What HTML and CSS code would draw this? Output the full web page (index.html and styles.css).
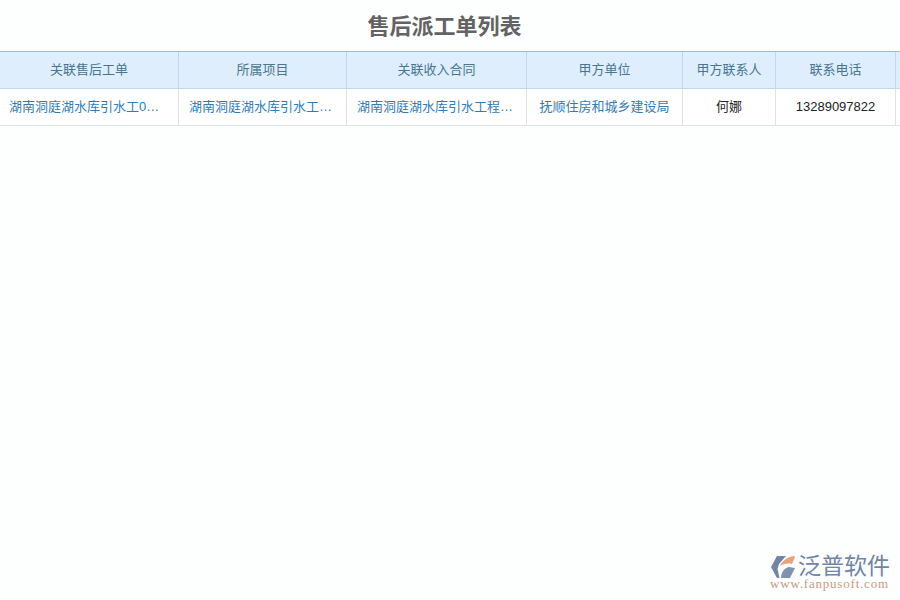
FILE: index.html
```html
<!DOCTYPE html>
<html lang="zh">
<head>
<meta charset="utf-8">
<title>售后派工单列表</title>
<link rel="stylesheet" href="styles.css">
</head>
<body>
<h1 class="title">售后派工单列表</h1>
<div class="table">
  <div class="row head">
    <div class="cell c1">关联售后工单</div>
    <div class="cell c2">所属项目</div>
    <div class="cell c3">关联收入合同</div>
    <div class="cell c4">甲方单位</div>
    <div class="cell c5">甲方联系人</div>
    <div class="cell c6">联系电话</div>
    <div class="cell c7"></div>
  </div>
  <div class="row body">
    <div class="cell c1 link left">湖南洞庭湖水库引水工0…</div>
    <div class="cell c2 link left">湖南洞庭湖水库引水工…</div>
    <div class="cell c3 link left">湖南洞庭湖水库引水工程…</div>
    <div class="cell c4 link">抚顺住房和城乡建设局</div>
    <div class="cell c5">何娜</div>
    <div class="cell c6">13289097822</div>
    <div class="cell c7"></div>
  </div>
</div>
<div class="brand">
  <div class="brand-top">
    <svg class="brand-mark" width="26" height="24" viewBox="0 0 26 24" aria-hidden="true">
      <path d="M7 1h9L9 9 7.500 14l2 9H7L1 12z" fill="#6f86a6"/>
      <path d="M10 11c2-5 7-9 14-10l1 1-3 7c-5-1-9 0-12 2z" fill="#e9a27c"/>
      <path d="M11 23c0-5 3-10 8-11l6 1-5 10z" fill="#7f93ae"/>
    </svg>
    <span class="brand-name">泛普软件</span>
  </div>
  <div class="brand-url">www.fanpusoft.com</div>
</div>
</body>
</html>
```

FILE: styles.css
```css
html, body {
  margin: 0;
  padding: 0;
  height: 600px;
  overflow: hidden;
  background: #fdfefe;
  font-family: "Liberation Sans", "Noto Sans CJK SC", sans-serif;
  font-size: 13px;
}
.title {
  box-sizing: border-box;
  margin: 0;
  padding-right: 11px;
  height: 51px;
  line-height: 53px;
  text-align: center;
  font-size: 22px;
  font-weight: bold;
  color: #636363;
}
.table {
  width: 900px;
  border-top: 1px solid #9dbdd6;
}
.row {
  display: flex;
  height: 36px;
  line-height: 35px;
  border-bottom: 1px solid #dde3e8;
}
.head {
  background: #deeefc;
  color: #4a7590;
  border-bottom-color: #c5d8ea;
}
.body {
  background: #fff;
  color: #222;
}
.cell {
  box-sizing: border-box;
  flex: none;
  text-align: center;
  white-space: nowrap;
  border-right: 1px solid #dde3e8;
}
.head .cell {
  border-right-color: #c5d8ea;
}
.c1 { width: 179px; }
.c2 { width: 168px; }
.c3 { width: 180px; }
.c4 { width: 156px; }
.c5 { width: 93px; }
.c6 { width: 120px; }
.c7 { width: 4px; border-right: 0; }
.link {
  color: #2f7db8;
}
.left {
  text-align: left;
  padding-left: 10px;
}
.c1.left {
  padding-left: 9px;
}
.brand {
  position: absolute;
  right: 10px;
  bottom: 10px;
  width: 120px;
}
.brand-top {
  display: flex;
  align-items: center;
  gap: 2px;
  height: 23px;
}
.brand-mark {
  flex: none;
}
.brand-name {
  font-size: 23px;
  line-height: 23px;
  color: #6f86a6;
  white-space: nowrap;
}
.brand-url {
  font-family: "Liberation Serif", serif;
  font-size: 13px;
  line-height: 12px;
  letter-spacing: 0.8px;
  color: #c99a7e;
  white-space: nowrap;
}
```
